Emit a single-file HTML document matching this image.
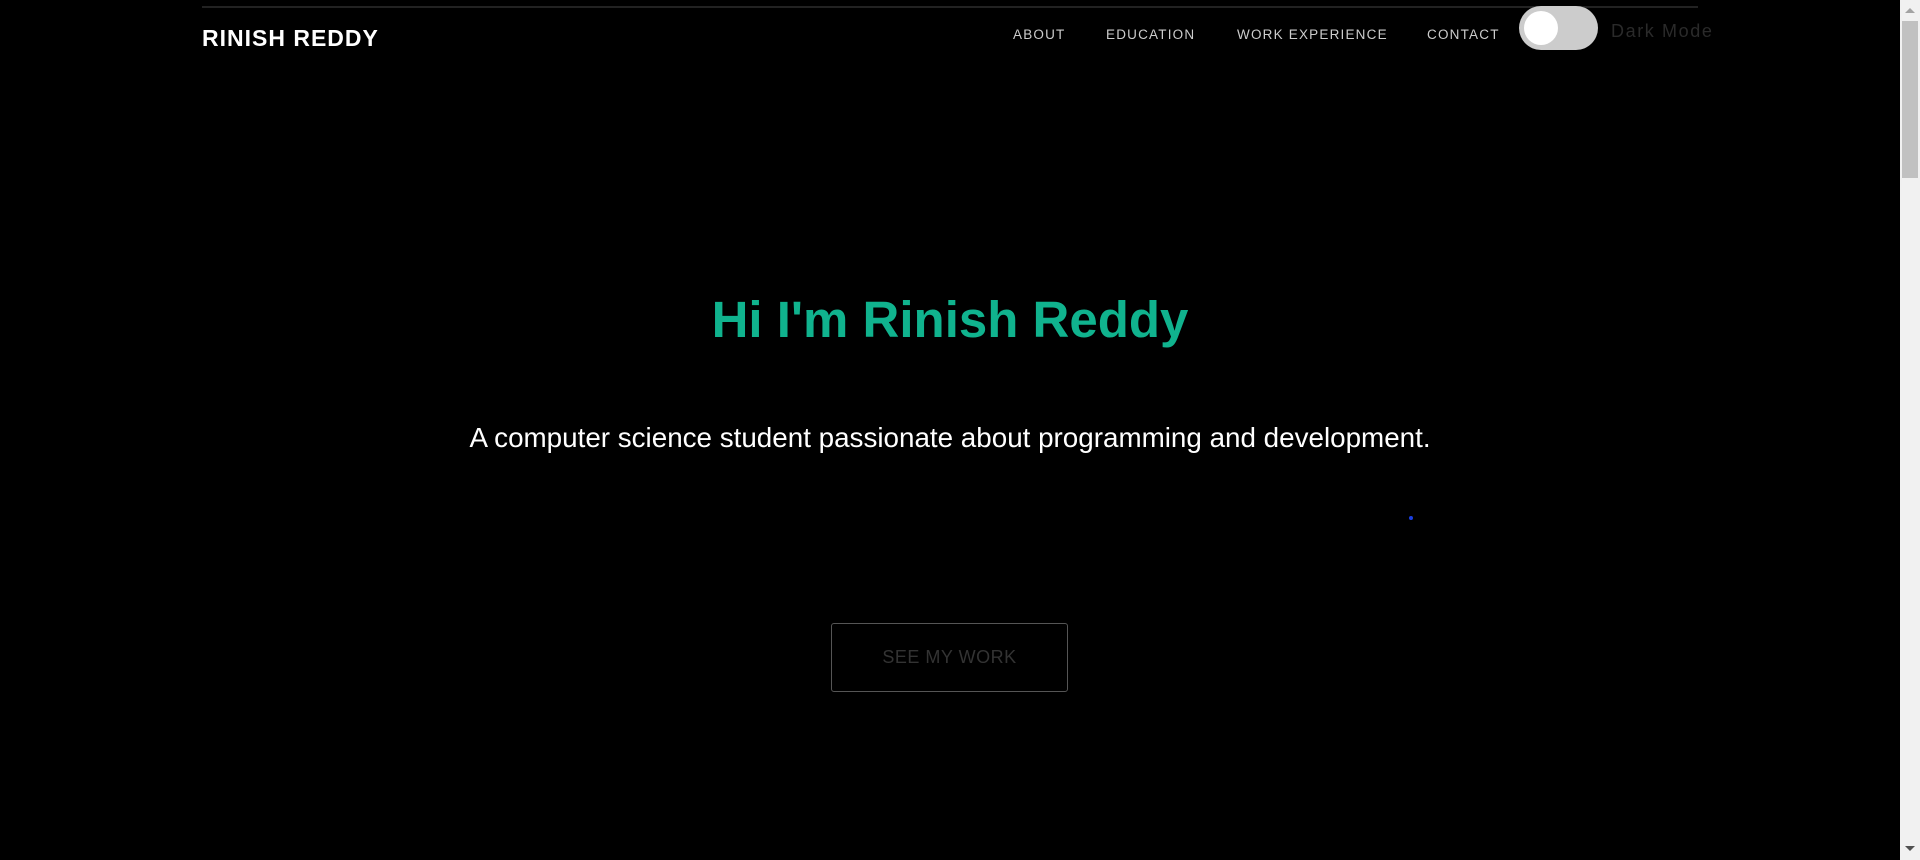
<!DOCTYPE html>
<html><head><meta charset="utf-8"><style>
html,body{margin:0;padding:0;background:#000;width:1920px;height:860px;overflow:hidden;font-family:"Liberation Sans",sans-serif;}
.abs{position:absolute;white-space:nowrap;}
</style></head><body>
<div class="abs" style="left:202px;top:6px;width:1496px;height:2px;background:#222;"></div>
<div class="abs" style="left:202px;top:24px;font-size:23px;font-weight:bold;color:#fff;letter-spacing:1px;line-height:28px;">RINISH REDDY</div>
<div class="abs" style="left:1013px;top:26px;font-size:13.5px;color:#ccc;letter-spacing:1.2px;line-height:17px;">ABOUT</div>
<div class="abs" style="left:1106px;top:26px;font-size:13.5px;color:#ccc;letter-spacing:1.2px;line-height:17px;">EDUCATION</div>
<div class="abs" style="left:1237px;top:26px;font-size:13.5px;color:#ccc;letter-spacing:1.2px;line-height:17px;">WORK EXPERIENCE</div>
<div class="abs" style="left:1427px;top:26px;font-size:13.5px;color:#ccc;letter-spacing:1.2px;line-height:17px;">CONTACT</div>
<div class="abs" style="left:1519px;top:6px;width:79px;height:44px;border-radius:22px;background:#ccc;"></div>
<div class="abs" style="left:1524px;top:11px;width:34px;height:34px;border-radius:50%;background:#fff;"></div>
<div class="abs" style="left:1611px;top:20px;font-size:18px;color:#2a2a2a;letter-spacing:1.6px;line-height:22px;">Dark Mode</div>
<div class="abs" style="left:1900px;top:0;width:20px;height:860px;background:#f1f1f1;"></div>
<div class="abs" style="left:1902px;top:21px;width:16px;height:157px;background:#c1c1c1;"></div>
<div class="abs" style="left:1905px;top:8px;width:0;height:0;border-left:5px solid transparent;border-right:5px solid transparent;border-bottom:5px solid #a3a3a3;"></div>
<div class="abs" style="left:1905px;top:846px;width:0;height:0;border-left:5px solid transparent;border-right:5px solid transparent;border-top:5px solid #505050;"></div>
<div class="abs" style="left:0;width:1900px;top:290px;text-align:center;font-size:51px;font-weight:bold;color:#10b38e;line-height:60px;">Hi I'm Rinish Reddy</div>
<div class="abs" style="left:0;width:1900px;top:421px;text-align:center;font-size:27.8px;color:#fff;line-height:34px;">A computer science student passionate about programming and development.</div>
<div class="abs" style="left:1409px;top:516px;width:4px;height:4px;border-radius:50%;background:#1a3fe0;"></div>
<div class="abs" style="left:831px;top:623px;width:235px;height:67px;border:1px solid #555;border-radius:3px;text-align:center;line-height:67px;font-size:18px;color:#333;letter-spacing:0.5px;">SEE MY WORK</div>
</body></html>
